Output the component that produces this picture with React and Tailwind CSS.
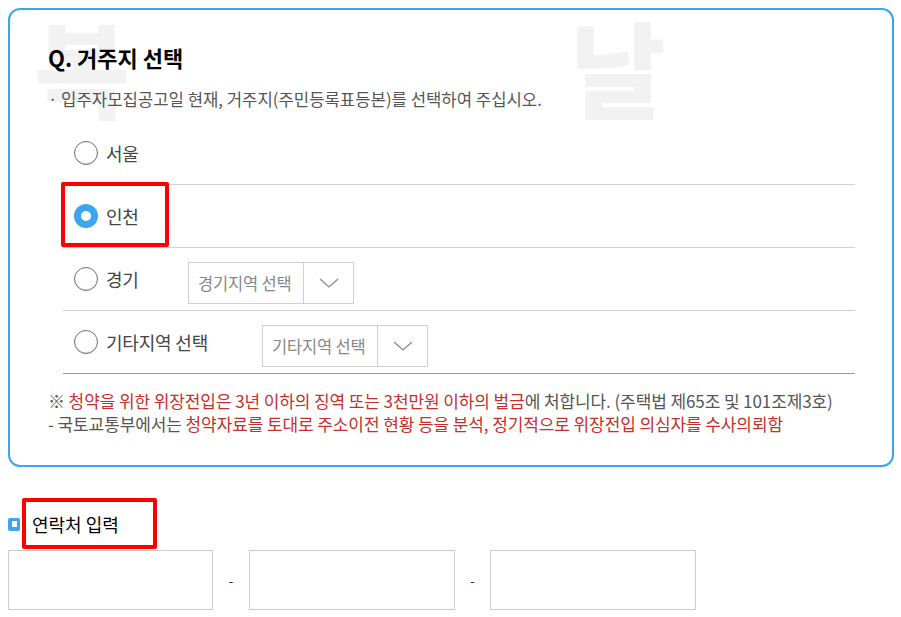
const font = { fontFamily: '"Noto Sans CJK KR", "Noto Sans", sans-serif' };

function Radio({ checked }) {
  if (checked) {
    return (
      <span className="flex h-[24px] w-[24px] items-center justify-center rounded-full bg-[#3ba5f0]">
        <span className="h-[10px] w-[10px] rounded-full bg-white" />
      </span>
    );
  }
  return (
    <span className="h-[24px] w-[24px] rounded-full border-[1.5px] border-[#6f6f6f] bg-white shadow-[inset_0_-1px_1px_rgba(0,0,0,0.15)]" />
  );
}

function Select({ label }) {
  return (
    <div className="flex h-[42px] w-[166px] border border-[#cfcfcf] bg-white">
      <div className="flex flex-1 items-center pl-[9px] text-[16.5px] tracking-[-0.2px] text-[#888]">{label}</div>
      <div className="flex w-[50px] items-center justify-center border-l border-[#cfcfcf]">
        <svg width="20" height="10" viewBox="0 0 20 10" fill="none">
          <path d="M1 1 L10 9 L19 1" stroke="#8a8a8a" strokeWidth="1.3" />
        </svg>
      </div>
    </div>
  );
}

function Option({ label, checked, select, selectOffset, last, highlight }) {
  return (
    <div className={`relative flex h-[63px] items-center border-b ${last ? 'border-[#9a9a9a]' : 'border-[#d0d0d0]'}`}>
      <div className="ml-[11px] flex items-center">
        <Radio checked={checked} />
        <span className="ml-[8px] text-[18px] tracking-[-0.2px] text-[#444]">{label}</span>
      </div>
      {select && (
        <div className="absolute top-[14px]" style={{ left: selectOffset }}>
          <Select label={select} />
        </div>
      )}
      {highlight && (
        <div className="absolute left-[-2px] top-[-3px] h-[65px] w-[108px] rounded-[2px] border-4 border-[#ff0000]" />
      )}
    </div>
  );
}

export default function App() {
  return (
    <div className="min-h-[617px] w-[901px] bg-white pt-[8px]" style={font}>
      <div className="relative mx-[8px] h-[459px] w-[886px] overflow-hidden rounded-[12px] border-2 border-[#3aa6f0] px-[38px] pt-[32px]">
        <div className="pointer-events-none absolute left-[24px] top-[4px] select-none text-[104px] font-black leading-none text-[#f2f2f2]">복</div>
        <div className="pointer-events-none absolute left-[560px] top-[4px] select-none text-[104px] font-black leading-none text-[#f2f2f2]">날</div>

        <h2 className="relative text-[22px] font-bold leading-[30px] text-black">Q. 거주지 선택</h2>
        <p className="relative mt-[16px] text-[16.7px] leading-[22px] text-[#555]">· 입주자모집공고일 현재, 거주지(주민등록표등본)를 선택하여 주십시오.</p>

        <div className="ml-[15px] mt-[12px] w-[792px]">
          <Option label="서울" />
          <Option label="인천" checked highlight />
          <Option label="경기" select="경기지역 선택" selectOffset={125} />
          <Option label="기타지역 선택" select="기타지역 선택" selectOffset={199} last />
        </div>

        <div className="mt-[15px] text-[17px] leading-[23px] tracking-[-0.1px] text-[#555]">
          <p>
            ※ <span className="text-[#c4302b]">청약을 위한 위장전입은 3년 이하의 징역 또는 3천만원 이하의 벌금</span>에 처합니다. (주택법 제65조 및 101조제3호)
          </p>
          <p>
            - 국토교통부에서는 <span className="text-[#c4302b]">청약자료를 토대로 주소이전 현황 등을 분석, 정기적으로 위장전입 의심자를 수사의뢰함</span>
          </p>
        </div>
      </div>

      <div className="relative ml-[8px] mt-[44px] flex items-center">
        <span className="flex h-[13px] w-[12px] items-center justify-center rounded-[2px] bg-[#3ba5f0]">
          <span className="h-[6px] w-[5px] bg-white" />
        </span>
        <span className="ml-[12px] text-[18px] leading-[26px] text-black">연락처 입력</span>
        <div className="absolute left-[14px] top-[-13px] h-[51px] w-[135px] rounded-[2px] border-4 border-[#ff0000]" />
      </div>

      <div className="ml-[8px] mt-[13px] flex items-center">
        <div className="h-[60px] w-[205px] border border-[#cccccc]" />
        <span className="w-[36px] text-center text-[14px] text-[#333]">-</span>
        <div className="h-[60px] w-[206px] border border-[#cccccc]" />
        <span className="w-[35px] text-center text-[14px] text-[#333]">-</span>
        <div className="h-[60px] w-[206px] border border-[#cccccc]" />
      </div>
    </div>
  );
}
